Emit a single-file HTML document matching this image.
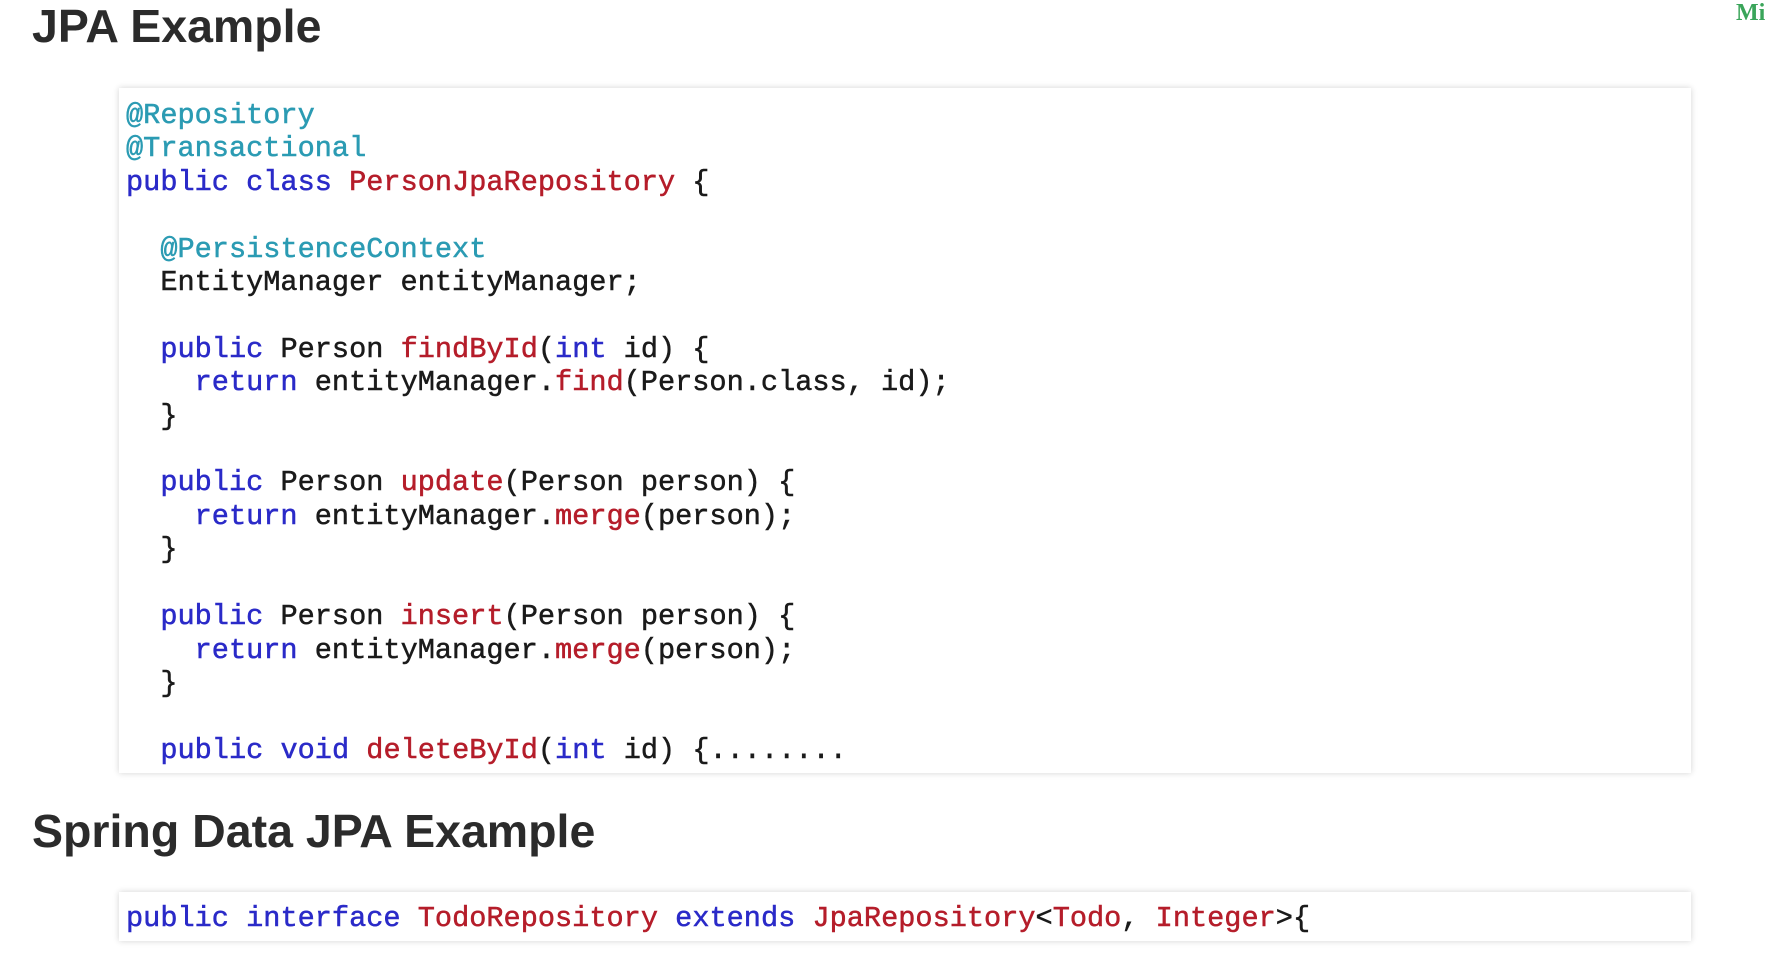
<!DOCTYPE html>
<html><head><meta charset="utf-8"><style>
html,body{margin:0;padding:0;background:#fff;width:1771px;height:975px;overflow:hidden;position:relative}
h1{position:absolute;margin:0;font-family:"Liberation Sans",sans-serif;font-weight:bold;font-size:46.5px;color:#2b2b2b;letter-spacing:0;line-height:1}
.box{position:absolute;left:119px;width:1572px;background:#fff;box-shadow:0 0 6px rgba(0,0,0,0.18)}
pre{margin:0;position:absolute;left:7px;font-family:"Liberation Mono",monospace;font-size:28.6px;line-height:33.4px;color:#1a1a1a;-webkit-text-stroke:0.5px currentColor}
.a{color:#2b9bb3}.k{color:#2a2ac8}.r{color:#b51d2a}
.mi{position:absolute;left:1736px;top:0;font-family:"Liberation Serif",serif;font-weight:bold;font-size:24px;color:#3aa55a}
</style></head><body>
<h1 style="left:32px;top:3px">JPA Example</h1>
<div class="mi">Mi</div>
<div class="box" style="top:88px;height:685px">
<pre style="top:11px"><span class="a">@Repository</span>
<span class="a">@Transactional</span>
<span class="k">public</span> <span class="k">class</span> <span class="r">PersonJpaRepository</span> {

  <span class="a">@PersistenceContext</span>
  EntityManager entityManager;

  <span class="k">public</span> Person <span class="r">findById</span>(<span class="k">int</span> id) {
    <span class="k">return</span> entityManager.<span class="r">find</span>(Person.class, id);
  }

  <span class="k">public</span> Person <span class="r">update</span>(Person person) {
    <span class="k">return</span> entityManager.<span class="r">merge</span>(person);
  }

  <span class="k">public</span> Person <span class="r">insert</span>(Person person) {
    <span class="k">return</span> entityManager.<span class="r">merge</span>(person);
  }

  <span class="k">public</span> <span class="k">void</span> <span class="r">deleteById</span>(<span class="k">int</span> id) {........</pre>
</div>
<h1 style="left:32px;top:808px">Spring Data JPA Example</h1>
<div class="box" style="top:892px;height:49px">
<pre style="top:10px"><span class="k">public</span> <span class="k">interface</span> <span class="r">TodoRepository</span> <span class="k">extends</span> <span class="r">JpaRepository</span>&lt;<span class="r">Todo</span>, <span class="r">Integer</span>&gt;{</pre>
</div>
</body></html>
